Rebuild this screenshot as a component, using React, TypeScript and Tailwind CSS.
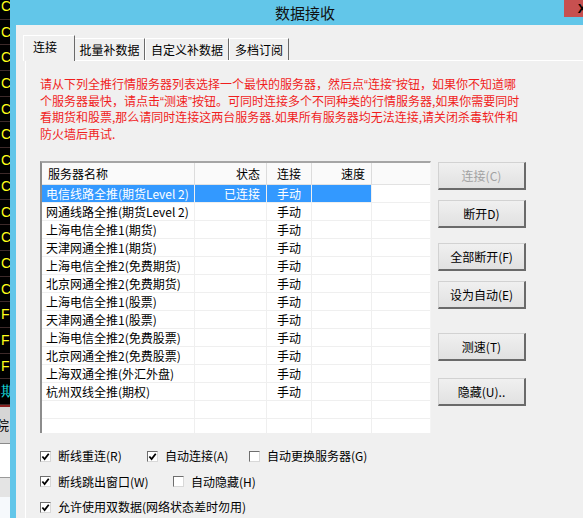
import clsx from "clsx";

const STRIP = ["C", "C", "C", "C", "C", "C", "C", "C", "C", "C", "C", "C", "F", "F", "F", "期"];

const SERVERS = [
  "电信线路全推(期货Level 2)",
  "网通线路全推(期货Level 2)",
  "上海电信全推1(期货)",
  "天津网通全推1(期货)",
  "上海电信全推2(免费期货)",
  "北京网通全推2(免费期货)",
  "上海电信全推1(股票)",
  "天津网通全推1(股票)",
  "上海电信全推2(免费股票)",
  "北京网通全推2(免费股票)",
  "上海双通全推(外汇外盘)",
  "杭州双线全推(期权)",
];

// narrow curly quotes, like the original font draws them
const Q = ({ c }: { c: string }) => <span className="font-['Liberation_Sans',sans-serif] leading-none">{c}</span>;

function Btn({ label, disabled }: { label: string; disabled?: boolean }) {
  return (
    <button
      className={clsx(
        "flex h-[28px] w-[88px] shrink-0 items-center justify-center border-t border-l border-[#d2d2d2] border-r-2 border-b-2 border-r-[#6a6a6a] border-b-[#6a6a6a] bg-gradient-to-b from-[#f0f0f0] to-[#e1e1e1] text-[12px] leading-none",
        disabled ? "text-[#a2a2a2]" : "text-black"
      )}
    >
      {label}
    </button>
  );
}

function Check({ label, checked, w }: { label: string; checked?: boolean; w?: string }) {
  return (
    <div className={clsx("flex items-center", w)}>
      <span className="flex h-[11px] w-[11px] shrink-0 items-center justify-center border border-t-[#6e6e6e] border-l-[#6e6e6e] border-r-[#d8d8d8] border-b-[#d8d8d8] bg-white">
        {checked && (
          <svg width="9" height="9" viewBox="0 0 10 10">
            <polyline points="1.5,5 4,7.8 8.6,2" fill="none" stroke="#000" strokeWidth="2" />
          </svg>
        )}
      </span>
      <span className="ml-[7px] whitespace-nowrap">{label}</span>
    </div>
  );
}

function SideStrip() {
  return (
    <div className="flex w-[10px] shrink-0 flex-col overflow-hidden bg-black">
      <div className="-mt-[6px] flex flex-col">
        {STRIP.map((c, i) => (
          <div
            key={i}
            className={clsx(
              "h-[25.7px] shrink-0 border-b border-[#3d2a2a] pl-[1px] font-['Liberation_Sans',sans-serif] text-[14px] leading-[25px]",
              c === "期" ? "text-[#18e0e0]" : "text-[#ffff1a]"
            )}
          >
            {c}
          </div>
        ))}
      </div>
      <div className="h-[2px] shrink-0 bg-[#8a2020]" />
      <div className="h-[37px] shrink-0 border-b border-[#8a8a8a] bg-[#d6d6d6] pt-[8px] text-[13px] leading-[20px] text-black">
        <span className="-ml-[4px] block">院</span>
      </div>
      <div className="h-[34px] shrink-0 border-b border-[#9a9a9a] bg-white" />
      <div className="h-[19px] shrink-0 bg-[#e4e4e4]" />
      <div className="flex-1 bg-[#f6f9fc]" />
    </div>
  );
}

export default function App() {
  return (
    <div className="flex h-[518px] w-[583px] overflow-hidden bg-black font-['Noto_Sans_CJK_SC',sans-serif] text-[12px] text-black">
      <SideStrip />
      <div className="flex w-[590px] shrink-0 flex-col bg-[#62c6e9]">
        <div className="flex h-[25px] shrink-0 items-start">
          <div className="flex-1 pl-[36px] text-center text-[15px] leading-[25px] text-[#111]">数据接收</div>
          <div className="flex h-[17px] w-[36px] items-center justify-center bg-[#c75050] font-['Liberation_Sans',sans-serif] text-[13px] font-bold leading-none text-black">
            X
          </div>
        </div>

        <div className="ml-[6px] flex flex-1 flex-col bg-[#f0f0f0] pt-[10px]">
          {/* tabs */}
          <div className="ml-[7px] flex h-[25px] shrink-0 items-start">
            <div className="relative z-10 flex h-[26px] w-[52px] items-center border-t border-l border-white border-r border-r-[#6a6a6a] bg-[#f0f0f0] pb-[4px] pl-[9px]">
              连接
            </div>
            <div className="mt-[3px] flex h-[22px] w-[70px] items-center justify-center border-t border-white border-r border-r-[#6a6a6a]">
              批量补数据
            </div>
            <div className="mt-[3px] flex h-[22px] w-[84px] items-center justify-center border-t border-l border-white border-r border-r-[#6a6a6a]">
              自定义补数据
            </div>
            <div className="mt-[3px] flex h-[22px] w-[60px] items-center justify-center border-t border-l border-white border-r border-r-[#6a6a6a]">
              多档订阅
            </div>
          </div>

          {/* panel */}
          <div className="ml-[9px] flex flex-1 flex-col border-t border-l border-white pl-[14px] pt-[15px]">
            <div className="h-[66px] whitespace-nowrap text-[12px] leading-[16.5px] text-[#f01e1e]">
              <div className="h-[16.5px]">
                请从下列全推行情服务器列表选择一个最快的服务器，然后点<Q c="“" />连接<Q c="”" />按钮，如果你不知道哪
              </div>
              <div className="h-[16.5px]">
                个服务器最快，请点击<Q c="“" />测速<Q c="”" />按钮。可同时连接多个不同种类的行情服务器,如果你需要同时
              </div>
              <div className="h-[16.5px]">看期货和股票,那么请同时连接这两台服务器.如果所有服务器均无法连接,请关闭杀毒软件和</div>
              <div className="h-[16.5px]">防火墙后再试.</div>
            </div>

            <div className="mt-[19px] flex shrink-0">
              <div className="h-[272px] w-[391px] shrink-0 overflow-hidden border-t-2 border-l-2 border-t-[#a5a5a5] border-l-[#8c8c8c] border-r border-r-[#f4f4f4] bg-white">
                <div className="grid grid-cols-[153px_72px_45px_60px_1fr]">
                  <div className="flex h-[22px] items-center border-r border-b border-r-[#dcdcdc] border-b-[#e2e2e2] bg-[#fafafa] pl-[6px]">服务器名称</div>
                  <div className="flex h-[22px] items-center justify-end border-r border-b border-r-[#dcdcdc] border-b-[#e2e2e2] bg-[#fafafa] pr-[6px]">状态</div>
                  <div className="flex h-[22px] items-center justify-center border-r border-b border-r-[#dcdcdc] border-b-[#e2e2e2] bg-[#fafafa]">连接</div>
                  <div className="flex h-[22px] items-center justify-end border-r border-b border-r-[#dcdcdc] border-b-[#e2e2e2] bg-[#fafafa] pr-[6px]">速度</div>
                  <div className="h-[22px] border-b border-b-[#e2e2e2] bg-[#fafafa]" />

                  {[...SERVERS, "", ""].map((name, i) => {
                    const sel = i === 0;
                    const cell = clsx(
                      "flex h-[18px] items-center border-r border-b border-[#efefef] leading-none",
                      sel ? "bg-[#3399ff] text-white" : "text-black"
                    );
                    return [
                      <div key={`n${i}`} className={clsx(cell, "whitespace-nowrap pl-[4px]")}>{name}</div>,
                      <div key={`s${i}`} className={clsx(cell, "justify-end pr-[6px]")}>{sel ? "已连接" : ""}</div>,
                      <div key={`c${i}`} className={clsx(cell, "justify-center")}>{name ? "手动" : ""}</div>,
                      <div key={`v${i}`} className={cell} />,
                      <div key={`e${i}`} className="h-[18px] border-b border-[#efefef]" />,
                    ];
                  })}
                </div>
              </div>

              <div className="ml-[7px] flex flex-col pt-[1px]">
                <Btn label="连接(C)" disabled />
                <div className="mt-[10px]"><Btn label="断开D)" /></div>
                <div className="mt-[15px]"><Btn label="全部断开(F)" /></div>
                <div className="mt-[10px]"><Btn label="设为自动(E)" /></div>
                <div className="mt-[24px]"><Btn label="测速(T)" /></div>
                <div className="mt-[17px]"><Btn label="隐藏(U).." /></div>
              </div>
            </div>

            <div className="mt-[10px] flex flex-col leading-none">
              <div className="flex h-[26px] items-center">
                <Check label="断线重连(R)" checked w="w-[107px]" />
                <Check label="自动连接(A)" checked w="w-[102px]" />
                <Check label="自动更换服务器(G)" />
              </div>
              <div className="flex h-[25.5px] items-center">
                <Check label="断线跳出窗口(W)" checked w="w-[133px]" />
                <Check label="自动隐藏(H)" />
              </div>
              <div className="flex h-[25.5px] items-center">
                <Check label="允许使用双数据(网络状态差时勿用)" checked />
              </div>
            </div>
          </div>
        </div>
      </div>
    </div>
  );
}
